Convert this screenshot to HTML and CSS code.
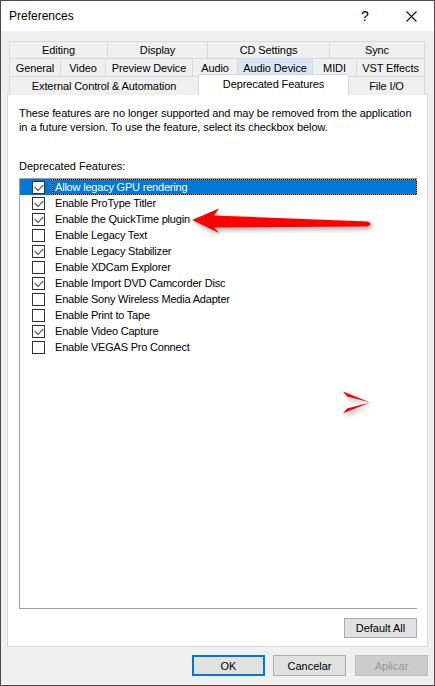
FILE: index.html
```html
<!DOCTYPE html>
<html lang="en">
<head>
    <meta charset="UTF-8">
    <title>Preferences</title>
    <link rel="stylesheet" href="styles.css">
</head>
<body>

    <div class="window">
        <!-- title bar -->
        <div class="titlebar">
            <span class="title">Preferences</span>
            <span class="caption-btn help">?</span>
            <span class="caption-btn close">
                <svg width="11" height="11" viewBox="0 0 11 11"><path d="M0.5 0.5L10.5 10.5M10.5 0.5L0.5 10.5" stroke="#111" stroke-width="1.1" fill="none"/></svg>
            </span>
        </div>

        <div class="content">
            <!-- tabs -->
            <div class="tabs">
                <div class="tab-row row-1">
                    <div class="tab">Editing</div>
                    <div class="tab">Display</div>
                    <div class="tab">CD Settings</div>
                    <div class="tab">Sync</div>
                </div>
                <div class="tab-row row-2">
                    <div class="tab">General</div>
                    <div class="tab">Video</div>
                    <div class="tab">Preview Device</div>
                    <div class="tab">Audio</div>
                    <div class="tab hover">Audio Device</div>
                    <div class="tab">MIDI</div>
                    <div class="tab">VST Effects</div>
                </div>
                <div class="tab-row row-3">
                    <div class="tab">External Control &amp; Automation</div>
                    <div class="tab active">Deprecated Features</div>
                    <div class="tab">File I/O</div>
                </div>
            </div>

            <!-- tab page -->
            <div class="panel">
                <p class="intro">These features are no longer supported and may be removed from the application<br>in a future version. To use the feature, select its checkbox below.</p>
                <div class="list-label">Deprecated Features:</div>

                <ul class="feature-list">
                    <li class="item selected"><span class="check checked"></span><span class="label">Allow legacy GPU rendering</span></li>
                    <li class="item"><span class="check checked"></span><span class="label">Enable ProType Titler</span></li>
                    <li class="item"><span class="check checked"></span><span class="label">Enable the QuickTime plugin</span></li>
                    <li class="item"><span class="check"></span><span class="label">Enable Legacy Text</span></li>
                    <li class="item"><span class="check checked"></span><span class="label">Enable Legacy Stabilizer</span></li>
                    <li class="item"><span class="check"></span><span class="label">Enable XDCam Explorer</span></li>
                    <li class="item"><span class="check checked"></span><span class="label">Enable Import DVD Camcorder Disc</span></li>
                    <li class="item"><span class="check"></span><span class="label">Enable Sony Wireless Media Adapter</span></li>
                    <li class="item"><span class="check"></span><span class="label">Enable Print to Tape</span></li>
                    <li class="item"><span class="check checked"></span><span class="label">Enable Video Capture</span></li>
                    <li class="item"><span class="check"></span><span class="label">Enable VEGAS Pro Connect</span></li>
                </ul>

                <div class="panel-foot">
                    <button class="btn">Default All</button>
                </div>
            </div>

            <!-- dialog buttons -->
            <div class="dialog-buttons">
                <button class="btn default">OK</button>
                <button class="btn">Cancelar</button>
                <button class="btn" disabled>Aplicar</button>
            </div>
        </div>

        <!-- red annotation arrows drawn over the screenshot -->
        <svg class="annotations" width="435" height="686" viewBox="0 0 435 686">
            <polygon class="arrow" points="192,220 219,208.5 214,215.5 368,221.5 371,224 368,226.5 214,227.5 219,233"/>
            <polygon class="arrow" points="343,391.5 370,402.5 347,396.5"/>
            <polygon class="arrow" points="343,413.5 370,402.5 347,408.5"/>
        </svg>
    </div>

</body>
</html>
```

FILE: styles.css
```css
/* base */
* {
    box-sizing: border-box;
}

body {
    margin: 0;
    padding: 0;
    font-family: "Liberation Sans", Arial, sans-serif;
    font-size: 11px;
    color: #000;
    background-color: #f0f0f0;
}

.window {
    position: relative;
    width: 435px;
    height: 686px;
    border: 1px solid #4a4a4a;
    background-color: #f0f0f0;
}

/* title bar */
.titlebar {
    display: flex;
    align-items: center;
    height: 30px;
    background-color: #ffffff;
    padding-left: 8px;
}

.title {
    flex: 1;
    font-size: 12px;
}

.caption-btn {
    width: 46px;
    height: 30px;
    display: flex;
    align-items: center;
    justify-content: center;
}

.help {
    font-size: 14px;
}

/* content */
.content {
    padding-top: 10px;
}

.tabs {
    margin: 0 8px;
}

.tab-row {
    display: grid;
}

.row-1 {
    grid-template-columns: 98px 100px 122px 96px;
    height: 17px;
}

.row-2 {
    grid-template-columns: 51px 45px 87px 45px 75px 44px 69px;
    height: 18px;
}

.row-3 {
    grid-template-columns: 189px 150px 77px;
    height: 18px;
}

.tab {
    display: flex;
    align-items: center;
    justify-content: center;
    border-top: 1px solid #d9d9d9;
    border-left: 1px solid #d9d9d9;
    background-color: #f0f0f0;
    white-space: nowrap;
    letter-spacing: -0.1px;
}

.tab:last-child {
    border-right: 1px solid #d9d9d9;
}

.tab.hover {
    background-color: #d8e6f5;
}

.tab.active {
    position: relative;
    z-index: 1;
    margin-top: -2px;
    height: 21px;
    padding-bottom: 2px;
    background-color: #ffffff;
    border-right: 1px solid #d9d9d9;
    margin-right: -1px;
}

/* tab page */
.panel {
    margin: 0 6px;
    height: 553px;
    background-color: #ffffff;
    border: 1px solid #d9d9d9;
    padding: 11px 10px 0 11px;
    display: flex;
    flex-direction: column;
}

.intro {
    margin: 0;
    line-height: 14px;
    white-space: nowrap;
    letter-spacing: -0.08px;
}

.list-label {
    margin-top: 25px;
    line-height: 14px;
}

.feature-list {
    list-style: none;
    margin: 5px 0 0 0;
    padding: 0;
    height: 431px;
    border-left: 1px solid #a0a0a0;
    border-top: 1px solid #a0a0a0;
    border-bottom: 1px solid #a0a0a0;
}

.item {
    display: flex;
    align-items: center;
    height: 16px;
    padding-left: 12px;
}

.check {
    position: relative;
    width: 13px;
    height: 13px;
    border: 1px solid #333;
    background-color: #fff;
    flex-shrink: 0;
}

.check.checked::after {
    content: "";
    position: absolute;
    left: 2px;
    top: 2.5px;
    width: 7px;
    height: 4px;
    border-left: 1px solid #333;
    border-bottom: 1px solid #333;
    transform: rotate(-45deg);
    transform-origin: center;
}

.label {
    flex: 1;
    height: 16px;
    line-height: 14px;
    margin-left: 7px;
    padding-left: 2px;
    border: 1px solid transparent;
    white-space: nowrap;
    letter-spacing: -0.2px;
}

.item.selected {
    background-color: #0078d7;
}

.item.selected .label {
    color: #fff;
    border: 1px dotted #ff8728;
    background: linear-gradient(#0078d7, #0078d7) padding-box, linear-gradient(#000, #000) border-box;
}

.panel-foot {
    display: flex;
    justify-content: flex-end;
    padding-top: 9px;
}

/* buttons */
.btn {
    width: 73px;
    height: 20px;
    padding: 0;
    font-family: inherit;
    font-size: 11px;
    color: #000;
    background-color: #e1e1e1;
    border: 1px solid #adadad;
}

.btn.default {
    border: 2px solid #0078d7;
}

.btn:disabled {
    color: #9a9a9a;
    background-color: #cccccc;
    border-color: #bfbfbf;
}

.dialog-buttons {
    display: flex;
    justify-content: flex-end;
    gap: 9px;
    padding: 8px 6px 0 0;
}

.dialog-buttons .btn {
    height: 21px;
}

.dialog-buttons .btn:first-child {
    margin-right: -1px;
}

/* annotations */
.annotations {
    position: absolute;
    left: -1px;
    top: -1px;
    pointer-events: none;
}

.arrow {
    fill: #ff0000;
    filter: drop-shadow(2px 3px 2px rgba(0, 0, 0, 0.3));
}
```
